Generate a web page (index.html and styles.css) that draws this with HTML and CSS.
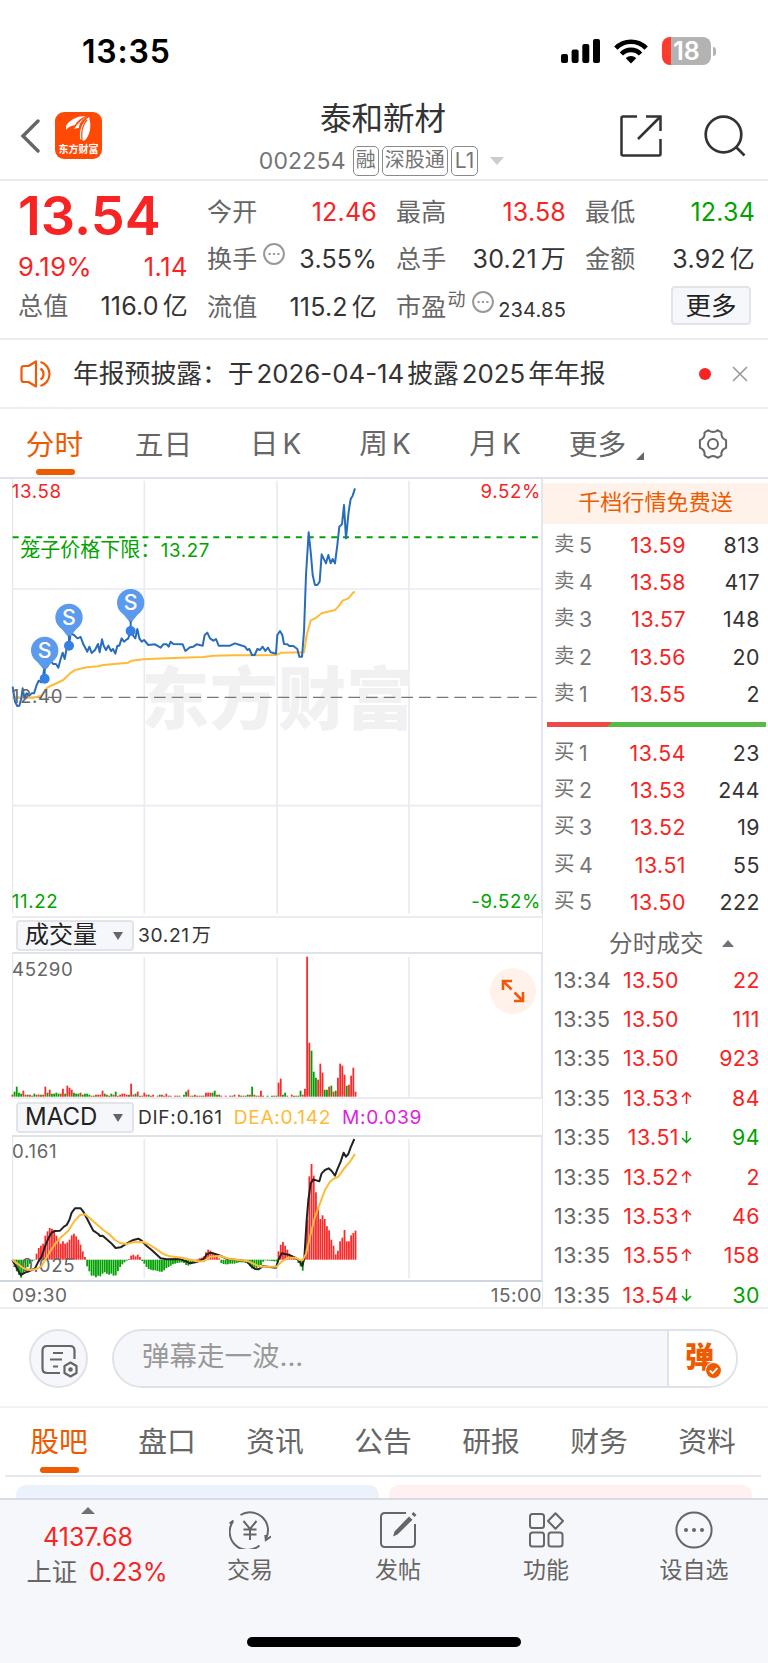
FILE: index.html
```html
<!DOCTYPE html>
<html lang="zh-CN">
<head>
  <meta charset="UTF-8" />
  <title>泰和新材 002254</title>
  <link rel="stylesheet" href="styles.css">
</head>
<body>
  <div class="status-bar">
    <span class="clock">13:35</span>
    <div class="status-icons">
      <svg class="signal" viewBox="0 0 39 24"><rect x="0" y="15" width="7" height="9" rx="2"/><rect x="10.6" y="10.5" width="7" height="13.5" rx="2"/><rect x="21.3" y="5" width="7" height="19" rx="2"/><rect x="32" y="0" width="7" height="24" rx="2"/></svg>
      <svg class="wifi" viewBox="0 0 34 25" fill="none" stroke="#000" stroke-width="4.6"><path d="M1.8 9.2C10 .6 24 .6 32.2 9.2"/><path d="M7.4 15C12.500 9.500 21.500 9.500 26.600 15"/><path d="M17 24.500l-5.200-5.300c2.900-2.900 7.500-2.900 10.400 0z" fill="#000" stroke="none"/></svg>
      <div class="battery"><span>18</span></div>
      <div class="battery-cap"></div>
    </div>
  </div>

  <header class="header">
    <svg class="back" viewBox="0 0 20 34" fill="none" stroke="#666" stroke-width="3.4" stroke-linecap="round"><path d="M18 2L3 17l15 15"/></svg>
    <div class="logo">
      <svg viewBox="0 0 47 30"><path d="M11 14c4-7 12-10 20-10-5 2-9 5-11 9-3 1-6 1-9 5z" fill="#fff"/><path d="M33 4c-6 3-11 8-14 13 2-1 4-1 5-1 0-5 4-9 9-12z" fill="#fff"/><path d="M34 5c-5 4-10 10-9 22l4 2c6-5 8-15 5-24z" fill="#fff"/><path d="M32 8c-5 5-6 11-5 20" stroke="#ff4a05" stroke-width="1.200" fill="none"/></svg>
      <span>东方财富</span>
    </div>
    <div class="title">
      <h1>泰和新材</h1>
      <div class="subtitle"><span class="code">002254</span><i>融</i><i>深股通</i><i class="level-tag">L1</i><b class="caret"></b></div>
    </div>
    <svg class="share" viewBox="0 0 42 42" fill="none" stroke="#333" stroke-width="2.500"><path d="M17 1.500H3q-1.500 0-1.500 1.500v36q0 1.500 1.500 1.500h36q1.500 0 1.500-1.500V24"/><path d="M26 1.500h14.500V16M40 2L18 24"/></svg>
    <svg class="search" viewBox="0 0 42 42" fill="none" stroke="#333" stroke-width="2.700"><circle cx="19.500" cy="19.500" r="17.800"/><path d="M32 32l8.500 8.500"/></svg>
  </header>

  <section class="quote">
    <div class="quote-col">
      <div class="price">13.54</div>
      <div class="row change red"><span>9.19%</span><span>1.14</span></div>
      <div class="row"><label>总值</label><span>116.0<u>亿</u></span></div>
    </div>
    <div class="quote-col">
      <div class="row"><label>今开</label><span class="red">12.46</span></div>
      <div class="row"><label>换手<svg class="dots" viewBox="0 0 22 22"><circle cx="11" cy="11" r="9.900"/><path d="M5.500 11h2.200M9.900 11h2.200M14.300 11h2.200"/></svg></label><span>3.55%</span></div>
      <div class="row"><label>流值</label><span>115.2<u>亿</u></span></div>
    </div>
    <div class="quote-col">
      <div class="row"><label>最高</label><span class="red">13.58</span></div>
      <div class="row"><label>总手</label><span>30.21<u>万</u></span></div>
      <div class="row"><label>市盈<sup>动</sup><svg class="dots" viewBox="0 0 22 22"><circle cx="11" cy="11" r="9.900"/><path d="M5.500 11h2.200M9.900 11h2.200M14.300 11h2.200"/></svg></label><span class="pe">234.85</span></div>
    </div>
    <div class="quote-col">
      <div class="row"><label>最低</label><span class="green">12.34</span></div>
      <div class="row"><label>金额</label><span>3.92<u>亿</u></span></div>
      <button class="more-btn">更多</button>
    </div>
  </section>

  <section class="notice">
    <svg class="speaker" viewBox="0 0 34 28" fill="none" stroke="#ee5a0a" stroke-width="2.200"><path d="M16 1.500v25L8.500 22H4q-2.500 0-2.500-2.500v-11Q1.500 6 4 6h4.500z" stroke-linejoin="round"/><path d="M20.500 8.500a6.500 6.500 0 0 1 0 11M20.500 2a12.500 12.500 0 0 1 0 24"/></svg>
    <p>年报预披露：于<em>2026-04-14</em>披露<em>2025</em>年年报</p>
    <span class="red-dot"></span>
    <svg class="close" viewBox="0 0 16 16" stroke="#999" stroke-width="1.600"><path d="M1 1l14 14M15 1L1 15"/></svg>
  </section>

  <nav class="chart-tabs">
    <span class="active">分时</span>
    <span>五日</span>
    <span>日<em>K</em></span>
    <span>周<em>K</em></span>
    <span>月<em>K</em></span>
    <span class="has-corner">更多</span>
    <svg class="gear" viewBox="0 0 32 32" fill="none" stroke="#666" stroke-width="2"><circle cx="16" cy="16" r="5"/><path d="M11.500 2.200q4.500 3.600 9 0l4 2.300q-.8 5.700 4.600 7.700v7.600q-5.400 2-4.600 7.700l-4 2.300q-4.500-3.600-9 0l-4-2.300q.8-5.700-4.600-7.700v-7.600q5.400-2 4.600-7.700z" stroke-linejoin="round"/></svg>
  </nav>

  <main class="market">
    <div class="charts">
      <svg class="plot price-plot" viewBox="0 12 1626 1311">
        <g class="grid">
          <path d="M38 12V1316M1625 12V1316"/>
          <path class="bold" d="M433 17V1316M831 17V1316M1227 17V1316M38 342H1625M38 992H1625"/>
        </g>
        <text class="watermark" x="424" y="748">东方财富</text>
        <path class="base-line" d="M38 667H1615"/>
        <path class="cage-line" d="M38 187H1615"/>
        <polyline class="avg" points="38,668 100,668 125,662 140,640 150,633 165,627 190,615 210,595 225,585 260,577 295,574 310,570 385,563 395,557 430,553 520,549 610,546 640,542 700,541 828,540 845,533 912,532 920,480 932,437 950,427 965,415 1005,405 1015,395 1028,377 1045,370 1060,352 1065,352"/>
        <polyline class="last" points="38,635 45,680 52,693 58,692 64,670 68,640 73,668 80,655 88,662 95,655 102,655 110,630 116,617 124,622 130,600 134,570 142,575 150,557 160,567 168,567 175,578 181,555 188,533 194,552 200,520 207,512 212,475 222,480 232,490 242,486 250,508 262,530 268,515 275,534 285,525 294,507 299,532 306,493 311,512 318,525 325,512 333,528 339,522 346,536 352,512 358,512 365,490 372,500 378,495 385,490 391,469 398,480 406,490 412,462 418,490 425,500 432,495 445,510 465,508 482,518 490,508 500,508 506,515 512,500 520,507 548,508 556,528 570,517 580,515 590,508 608,512 614,480 622,473 630,490 640,497 648,492 656,512 690,512 705,505 720,510 735,515 742,525 748,522 756,540 764,540 772,522 780,525 788,515 796,528 804,518 812,532 828,536 832,480 840,468 847,480 852,507 862,508 868,513 880,513 892,522 898,545 906,545 912,470 918,300 926,172 933,240 938,300 945,330 952,330 959,320 965,238 978,265 985,240 992,265 998,252 1005,265 1012,210 1018,155 1026,148 1032,90 1038,190 1046,110 1052,72 1058,62 1065,40"/>
        <g id="markers"></g>
        <text class="up" x="35" y="68">13.58</text>
        <text class="up end" x="1623" y="68">9.52%</text>
        <text class="down cage-label" x="61" y="246">笼子价格下限：</text>
        <text class="down" x="482" y="245">13.27</text>
        <text x="35" y="684">12.40</text>
        <text class="down" x="35" y="1300">11.22</text>
        <text class="down end" x="1623" y="1300">-9.52%</text>
      </svg>

      <div class="indicator">
        <button>成交量</button>
        <span class="amount">30.21<u>万</u></span>
      </div>
      <div class="volume">
        <svg class="plot volume-plot" viewBox="0 162 1626 432">
          <g class="grid">
            <path d="M38 165V590M1625 162V594"/>
            <path class="bold" d="M433 171V590M831 171V590M1227 171V590"/>
          </g>
          <g id="volumeBars"></g>
          <text x="36" y="227">45290</text>
        </svg>
        <div class="expand">
          <svg viewBox="0 0 24 24" fill="none" stroke="#ee5a0a" stroke-width="2.600"><path d="M2 11V2h9M2 2l8.500 8.500M22 13v9h-9M22 22l-8.500-8.500"/></svg>
        </div>
      </div>

      <div class="indicator macd-head">
        <button>MACD</button>
        <span>DIF:0.161</span><span class="dea">DEA:0.142</span><span class="m">M:0.039</span>
      </div>
      <svg class="plot macd-plot" viewBox="0 21 1626 429">
        <g class="grid">
          <path d="M38 21V445M1625 21V450"/>
          <path class="bold" d="M433 27V445M831 27V445M1227 27V445"/>
        </g>
        <g id="macdBars"></g>
        <text x="36" y="84">0.161</text>
        <text x="36" y="427">-0.025</text>
        <polyline class="dif-line" points="37,390 62,435 75,428 85,425 105,415 115,395 125,380 135,350 145,325 155,308 165,303 180,302 192,290 200,285 208,270 215,248 225,235 242,235 250,245 262,268 272,287 280,302 295,312 300,318 308,317 320,328 332,338 347,354 362,352 375,344 390,335 400,330 415,326 425,332 440,348 455,360 468,372 482,385 500,388 540,387 560,395 570,400 590,396 612,386 620,373 632,368 655,375 680,386 740,394 755,410 765,417 775,418 788,409 810,411 828,413 835,390 845,370 865,374 885,383 898,392 907,408 913,385 920,270 925,210 932,160 940,148 958,154 965,130 975,120 986,115 995,123 1005,137 1012,118 1022,95 1031,68 1038,80 1045,72 1052,52 1063,27"/>
        <polyline class="avg" points="37,390 55,403 70,415 90,420 110,417 125,408 135,390 150,365 165,342 180,325 205,302 222,275 240,255 255,253 270,265 290,283 310,300 330,315 345,330 360,339 380,342 400,337 430,336 450,345 470,358 490,372 510,379 550,384 590,394 612,394 630,380 660,378 690,387 745,394 765,403 780,410 830,410 845,395 865,383 885,383 900,390 908,390 918,372 930,320 945,260 960,220 975,180 990,155 1000,147 1015,140 1035,112 1050,95 1065,72"/>
      </svg>
      <div class="time-axis"><span>09:30</span><span>15:00</span></div>
    </div>

    <aside class="book">
      <div class="banner">千档行情免费送</div>
      <div class="levels" id="sells"></div>
      <div class="ratio"><svg viewBox="0 0 219 5" preserveAspectRatio="none"><path d="M0 0h219v5H0z" fill="#55bb44"/><path d="M0 0h65l-5 5H0z" fill="#ee4848"/></svg></div>
      <div class="levels buys" id="buys"></div>
      <div class="ticks-title">分时成交<b class="caret-up"></b></div>
      <div class="ticks" id="ticks"></div>
    </aside>
  </main>

  <section class="comment">
    <div class="comment-settings">
      <svg viewBox="0 0 38 34" fill="none" stroke="#666" stroke-width="2.200"><path d="M19 29H6q-4.500 0-4.500-4.500v-18Q1.500 2 6 2h23q4.500 0 4.500 4.500V15"/><path d="M12 9h10M9 15.500h12M12 22.500h5"/><path d="M29.500 18.500l6 3.500v7l-6 3.500-6-3.500v-7z" stroke-linejoin="round"/><circle cx="29.500" cy="25.500" r="1.200"/></svg>
    </div>
    <div class="comment-box">
      <span class="placeholder">弹幕走一波...</span>
      <div class="danmu">
        <b>弹</b>
        <svg viewBox="0 0 16 16"><circle cx="8" cy="8" r="7.500" fill="#ee5a00" stroke="#fff"/><path d="M4.500 8l2.600 2.600 4.500-4.800" fill="none" stroke="#fff" stroke-width="1.700"/></svg>
      </div>
    </div>
  </section>

  <nav class="info-tabs">
    <span class="active">股吧</span><span>盘口</span><span>资讯</span><span>公告</span><span>研报</span><span>财务</span><span>资料</span>
  </nav>
  <div class="cards"><div class="card-blue"></div><div class="card-pink"></div></div>

  <footer class="tabbar">
    <div class="index">
      <b class="caret-up"></b>
      <div class="index-value red">4137.68</div>
      <div class="index-change"><span>上证</span><span class="red">0.23%</span></div>
    </div>
    <div class="tab">
      <svg viewBox="0 0 42 38"><path d="M11.500 4A18 18 0 0 1 37 27.500M30.500 34.500A18 18 0 0 1 4 10.500M.5 12.500L4.500 9.500M42 25.500l-5.200 3.500-.5-5"/><path d="M14.500 10l6.500 8 6.500-8M21 18v11M14.500 18.500h13M14.500 23.500h13"/></svg>
      <span>交易</span>
    </div>
    <div class="tab">
      <svg viewBox="0 0 42 38"><path d="M29 2H8q-4 0-4 4v26q0 4 4 4h26q4 0 4-4V13"/><path class="fill" d="M32 5.500l3.500 3.200L20.500 23.500l-4.500 2 1.500-5zM34.500 3l2-2 3 3-2 2z"/></svg>
      <span>发帖</span>
    </div>
    <div class="tab">
      <svg viewBox="0 0 42 38"><rect x="5" y="3" width="14" height="14" rx="2.500"/><rect x="5" y="21.500" width="14" height="14" rx="2.500"/><rect x="23.500" y="21.500" width="14" height="14" rx="2.500"/><path d="M30.500 2.200l7.500 7.800-7.500 7.800L23 10z" stroke-linejoin="round"/></svg>
      <span>功能</span>
    </div>
    <div class="tab">
      <svg viewBox="0 0 42 38"><circle cx="21" cy="19" r="17.600"/><g class="fill"><circle cx="13" cy="19" r="2"/><circle cx="21" cy="19" r="2"/><circle cx="29" cy="19" r="2"/></g></svg>
      <span>设自选</span>
    </div>
    <div class="home-indicator"></div>
  </footer>

  <script src="script.js"></script>
</body>
</html>
```
FILE: styles.css
```css
* {
  box-sizing: border-box;
  margin: 0;
  padding: 0;
}

body {
  width: 768px;
  height: 1663px;
  overflow: hidden;
  background: #fff;
  color: #333;
  font-family: Inter, "Noto Sans CJK SC", sans-serif;
  font-size: 25px;
}

svg { display: block; flex: none; }
em, i, u { font-style: normal; text-decoration: none; }
.red { color: #f82323; }
.green { color: #00a300; }

/* status bar */
.status-bar {
  height: 96px;
  padding: 6px 52px 0 82px;
  display: flex;
  align-items: center;
  justify-content: space-between;
}

.clock {
  color: #000;
  font-size: 32px;
  font-weight: 600;
  letter-spacing: .8px;
}

.status-icons { display: flex; align-items: center; }
.signal { width: 39px; height: 24px; }
.wifi { width: 34px; height: 25px; margin: 0 14px; }

.battery {
  width: 49px;
  height: 28px;
  border-radius: 8px;
  background: linear-gradient(to right, #ff3b30 9px, #b3b3b3 9px);
  color: #fff;
  font-size: 25px;
  font-weight: 600;
  line-height: 28px;
  text-align: center;
}

.battery-cap {
  width: 3px;
  height: 9px;
  margin-left: 2px;
  border-radius: 0 4px 4px 0;
  background: #b3b3b3;
}

/* header */
.header {
  height: 85px;
  padding: 0 22px 0 20px;
  display: flex;
  align-items: flex-start;
  border-bottom: 2px solid #e9eaee;
}

.back { width: 20px; height: 34px; margin-top: 23px; }

.logo {
  width: 47px;
  height: 47px;
  margin: 16px 0 0 15px;
  border-radius: 9px;
  background: #ff4a05;
  color: #fff;
  text-align: center;
}

.logo svg { width: 47px; height: 30px; }
.logo span {
  display: block;
  font-family: "Noto Sans CJK SC", sans-serif;
  font-size: 10px;
  font-weight: 700;
  line-height: 13px;
}

.title { flex: 1; text-align: center; }
.title h1 {
  margin: 1px 0 0 44px;
  font-size: 31.500px;
  font-weight: 400;
  line-height: 44px;
  height: 49px;
}

.subtitle {
  display: flex;
  justify-content: center;
  padding-left: 41px;
  gap: 3px;
  align-items: center;
  color: #757575;
  font-size: 20px;
  height: 30px;
}

.code { margin-right: 4px; font-size: 23px; letter-spacing: .2px; }
.subtitle i {
  height: 30px;
  padding: 0 2px;
  border: 1.500px solid #8a8a8a;
  border-radius: 5px;
  line-height: 27px;
}
.subtitle .level-tag { padding: 0 3px; font-size: 21px; }

.caret {
  margin-left: 9px;
  border: 7px solid transparent;
  border-top: 8px solid #ccc;
  border-bottom: 0;
}

.share { width: 42px; height: 42px; margin: 19px 42px 0 0; }
.search { width: 42px; height: 42px; margin-top: 19px; }

/* quote */
.quote {
  height: 159px;
  padding: 8px 0 0 18px;
  display: grid;
  grid-template-columns: repeat(4, 170px);
  gap: 19px;
  border-bottom: 2px solid #ececec;
}

.row {
  height: 47.300px;
  display: flex;
  align-items: center;
  justify-content: space-between;
  line-height: 47px;
  letter-spacing: .2px;
  white-space: nowrap;
}

.row label { display: flex; color: #666; }
.row u { margin-left: 4px; }
.price {
  height: 53px;
  color: #f82323;
  font-size: 54px;
  font-weight: 600;
  line-height: 53px;
}
.change { height: 41px; line-height: 41px; padding-top: 8px; font-size: 25.500px; letter-spacing: .5px; }
.row sup { font-size: 18px; line-height: 32px; margin-left: 1px; }
.dots {
  width: 22px;
  height: 22px;
  margin: 7px 0 0 6px;
  fill: none;
  stroke: #999;
  stroke-width: 2;
}
.pe { font-size: 20px; padding-top: 6px; }

.more-btn {
  display: block;
  width: 80px;
  height: 39px;
  margin: 2px 0 0 86px;
  border: 2px solid #e2e4ea;
  border-radius: 4px;
  background: #f6f7fa;
  color: #222;
  font: 25.500px/32px "Noto Sans CJK SC", sans-serif;
}
.more-btn { padding-bottom: 2px; }

/* notice */
.notice {
  height: 69px;
  padding: 0 20px 0 20px;
  display: flex;
  align-items: center;
  border-bottom: 2px solid #eee;
}

.speaker { width: 34px; height: 28px; }
.notice p { flex: 1; margin-left: 19px; padding-bottom: 4px; font-size: 25.800px; white-space: nowrap; }
.notice em { margin: 0 3px; }
.red-dot { width: 12px; height: 12px; border-radius: 50%; background: #f82323; }
.close { width: 16px; height: 16px; margin-left: 21px; }

/* chart tabs */
.chart-tabs {
  height: 70px;
  display: grid;
  grid-template-columns: 109px 109px 115px 104px 116px 89px 1fr;
  align-items: center;
  border-bottom: 2px solid #dfe2e8;
  color: #666;
  font-size: 28.700px;
  line-height: 69px;
  text-align: center;
}

.chart-tabs em { margin-left: 4px; font-size: 28px; }
.chart-tabs span, .info-tabs span { position: relative; }
.active { color: #ee5a00; }
.active::after {
  content: "";
  position: absolute;
  left: 50%;
  bottom: 4px;
  width: 39px;
  height: 6px;
  margin-left: -19px;
  border-radius: 3px;
  background: #ee5a00;
}

.has-corner::after {
  content: "";
  position: absolute;
  right: -2px;
  bottom: 19px;
  border-left: 8px solid transparent;
  border-bottom: 8px solid #666;
}

.gear { width: 32px; height: 32px; margin-left: 55px; }

/* charts */
.market {
  height: 830px;
  display: flex;
  border-bottom: 2px solid #eee;
}

.charts { width: 542px; flex: none; }
.plot { width: 542px; fill: none; }
.price-plot { height: 437px; }
.volume-plot { height: 144px; }
.macd-plot { height: 145px; border-bottom: 2px solid #cfd5dd; }

.plot text { font-size: 56px; letter-spacing: 2px; fill: #666; }
.plot .up { fill: #f82323; }
.plot .down { fill: #00a300; }
.plot .end { text-anchor: end; }
.plot .cage-label { font-size: 60px; letter-spacing: 0; }
.plot .watermark {
  font-family: "Noto Sans CJK SC", sans-serif;
  font-size: 204px;
  font-weight: 900;
  letter-spacing: 1px;
  fill: #f1f1f1;
}

.grid path { stroke: #dfe2ee; stroke-width: 3; }
.grid .bold { stroke: #e8ebf2; stroke-width: 5; }
.base-line { stroke: #777; stroke-width: 4; stroke-dasharray: 35 18; }
.cage-line { stroke: #00a300; stroke-width: 6; stroke-dasharray: 18 17.400; }
.last { stroke: #286dbb; stroke-width: 6; stroke-linejoin: round; }
.avg { stroke: #ffba38; stroke-width: 6; stroke-linejoin: round; }
.dif-line { stroke: #222; stroke-width: 6; stroke-linejoin: round; }
.bar-up { stroke: #f82a2a; stroke-width: 5.400; }
.bar-down { stroke: #00a000; stroke-width: 5.400; }
.pin { fill: #5b9aed; }
.pin-dot { fill: #3480e5; }
.plot .pin-text { font-size: 64px; font-weight: 500; letter-spacing: 0; fill: #fff; text-anchor: middle; }

.indicator {
  height: 38px;
  margin-left: 12px;
  padding: 0 0 0 4px;
  display: flex;
  align-items: center;
  border-top: 2px solid #ececf0;
  border-bottom: 2px solid #dfe2e8;
  font-size: 19.200px;
  letter-spacing: .65px;
}

.macd-head { height: 40px; }
.indicator button {
  position: relative;
  width: 118px;
  height: 31px;
  margin-right: 4px;
  padding-left: 7px;
  border: 2px solid #e2e4ea;
  border-radius: 4px;
  background: #f6f7fa;
  color: #222;
  font: 24px/26px Inter, "Noto Sans CJK SC", sans-serif;
  text-align: left;
}

.indicator button::after {
  content: "";
  position: absolute;
  right: 9px;
  top: 10px;
  border: 5px solid transparent;
  border-top: 8px solid #666;
  border-bottom: 0;
}

.amount { padding-bottom: 2px; }
.amount u { margin-left: 2px; }
.dea { margin-left: 11px; color: #ffba38; }
.m { margin-left: 11px; color: #e021e0; }

.volume { position: relative; height: 143px; }
.expand {
  position: absolute;
  left: 490px;
  top: 14px;
  width: 46px;
  height: 46px;
  padding: 11px;
  border-radius: 50%;
  background: #fff2eb;
}
.expand svg { width: 24px; height: 24px; }

.time-axis {
  height: 26px;
  padding-left: 12px;
  display: flex;
  justify-content: space-between;
  color: #666;
  font-size: 19px;
  letter-spacing: .5px;
  line-height: 28px;
}

/* order book */
.book {
  flex: 1;
  padding-top: 4px;
  border-left: 1px solid #e4e6ee;
  font-size: 21.300px;
  letter-spacing: .5px;
  overflow: hidden;
}

.banner {
  height: 41px;
  background: #fff2eb;
  color: #ee5a00;
  font-size: 22px;
  letter-spacing: .1px;
  line-height: 38px;
  text-align: center;
}

.levels { padding: 3px 8px 0 11px; }
.level {
  height: 37.200px;
  display: grid;
  grid-template-columns: 60px 72px 1fr;
  align-items: center;
  line-height: 37px;
  text-align: right;
}

.level label { display: flex; gap: 4px; color: #757575; }
.level label u { font-size: 20.500px; line-height: 34px; }
.ratio { padding: 9px 2px 0 4px; }
.ratio svg { width: 219px; height: 5px; }
.buys { padding-top: 8px; }

.ticks-title {
  height: 39px;
  padding: 4px 0 0 66px;
  display: flex;
  align-items: center;
  color: #666;
  font-size: 23.500px;
  letter-spacing: .2px;
}

.caret-up {
  border: 6px solid transparent;
  border-top: 0;
  border-bottom: 7px solid #707078;
}
.ticks-title .caret-up { margin: 2px 0 0 18px; }

.ticks { padding: 0 8px 0 11px; }
.tick {
  height: 39.400px;
  display: grid;
  grid-template-columns: 58px 67px 15px 1fr;
  align-items: center;
  text-align: right;
}
.tick span:first-child { color: #666; text-align: left; }
.tick svg { width: 11px; height: 14px; margin-left: 2px; fill: none; stroke: currentColor; stroke-width: 1.500; }

/* comment input */
.comment {
  height: 99px;
  padding: 20px 30px 0 29px;
  display: flex;
  border-bottom: 2px solid #f2f2f4;
}

.comment-settings {
  width: 59px;
  height: 59px;
  padding: 13px 10px;
  border: 2px solid #e0e2e8;
  border-radius: 50%;
  background: #f6f7fa;
}
.comment-settings svg { width: 38px; height: 34px; }

.comment-box {
  flex: 1;
  height: 59px;
  margin-left: 24px;
  display: flex;
  overflow: hidden;
  border: 2px solid #dfe2e8;
  border-radius: 30px;
  background: #f6f7fa;
}

.placeholder {
  flex: 1;
  padding-left: 28px;
  color: #999;
  font-size: 27.500px;
  line-height: 51px;
}

.danmu {
  position: relative;
  width: 69px;
  border-left: 2px solid #dfe2e8;
  background: #fff;
}
.danmu b {
  display: block;
  padding-left: 16px;
  color: #ee5a00;
  font-size: 29px;
  font-weight: 900;
  line-height: 54px;
}
.danmu svg { position: absolute; left: 36px; top: 31px; width: 17px; height: 17px; }

/* info tabs */
.info-tabs {
  height: 69px;
  margin: 0 7px 0 5px;
  display: grid;
  grid-template-columns: repeat(7, 108px);
  border-bottom: 2px solid #e6e7ee;
  color: #666;
  font-size: 28.800px;
  line-height: 68px;
  text-align: center;
}
.info-tabs .active::after { bottom: 3px; }

.cards {
  height: 21px;
  padding: 8px 16px 0;
  display: grid;
  grid-template-columns: 1fr 1fr;
  gap: 10px;
}
.card-blue { border-radius: 10px 10px 0 0; background: #ecf2fc; }
.card-pink { border-radius: 10px 10px 0 0; background: #fff1f1; }

/* bottom bar */
.tabbar {
  position: relative;
  height: 166px;
  display: grid;
  grid-template-columns: 176px repeat(4, 148px);
  border-top: 2px solid #d9dde3;
  background: #f6f7fa;
  color: #666;
}

.index { display: flex; flex-direction: column; align-items: center; padding-top: 7px; }
.index-value { margin-top: 6px; font-size: 25px; line-height: 34px; }
.index-change { display: flex; gap: 12px; padding-left: 18px; font-size: 25.300px; line-height: 36px; }

.index .caret-up { border-width: 0 7px 7px; }
.tab { display: flex; flex-direction: column; align-items: center; font-size: 23px; }
.tab svg { width: 42px; height: 38px; margin-top: 11px; fill: none; stroke: #666; stroke-width: 2; }
.tab .fill { fill: #666; stroke: none; }
.tab span { margin-top: 4px; line-height: 35px; }

.home-indicator {
  position: absolute;
  left: 247px;
  bottom: 17px;
  width: 274px;
  height: 10px;
  border-radius: 5px;
  background: #000;
}
```
FILE: script.js
```js
// one bar per minute, positive = red, negative = green
const volume = [
  2,-5,-10,-4,-3,6,2,-2,2,-1,-3,2,2,-2,2,10,-4,7,-3,-3,-4,-3,3,8,-3,11,9,7,-4,-3,
  -3,4,-2,-3,-3,-2,1,-1,2,2,2,6,-3,2,-1,-3,2,-5,1,2,3,3,2,-2,13,2,-3,5,-1,1,
  4,2,-2,1,2,0,1,-2,2,1,3,-1,1,0,1,-1,1,0,-2,-5,7,1,-1,2,-1,1,-1,1,4,4,
  4,-4,-6,2,-2,1,0,1,0,1,-1,2,0,2,-1,1,-1,-2,2,-10,2,-1,1,6,1,0,-1,0,-1,1,
  -1,14,18,-2,-4,1,0,2,-1,1,-1,-6,2,8,140,54,-46,-25,-19,17,33,24,-7,-7,10,-11,5,-6,19,33,
  31,22,-11,12,21,29,5
];
const macd = [
  0,-10,-35,-45,-54,-40,-32,-22,-12,-5,-2,18,35,42,48,72,85,95,93,88,72,60,48,55,48,52,60,73,78,70,
  60,45,25,8,-20,-35,-48,-48,-53,-48,-50,-42,-38,-42,-45,-42,-48,-47,-35,-22,-14,-8,-3,2,12,15,10,15,8,-4,
  -12,-22,-28,-30,-32,-32,-34,-36,-36,-32,-25,-22,-18,-14,-12,-10,-9,-8,-10,-16,-18,-14,-8,-3,2,4,6,10,22,30,
  27,23,18,12,4,-10,-13,-14,-14,-12,-12,-12,-10,-8,-8,-8,-10,-12,-20,-26,-28,-26,-22,-16,-6,-2,-3,-3,-4,-5,
  -5,25,45,53,42,30,18,14,10,5,-10,-20,-33,25,120,250,287,252,202,156,122,133,122,100,88,60,42,16,27,55,
  66,89,55,55,73,80,87
];

function drawBars(id, data, base, scale) {
  document.getElementById(id).innerHTML = data.map((v, i) => {
    const x = (i * 6.6 + 37).toFixed(1);
    return v ? `<path class="${v > 0 ? 'bar-up' : 'bar-down'}" d="M${x} ${base}V${base - (id === 'volumeBars' ? Math.abs(v) : v) * scale}"/>` : '';
  }).join('');
}
drawBars('volumeBars', volume, 590, 3);
drawBars('macdBars', macd, 389, 1);

const markers = [[134, 526, 611], [207, 427, 512], [392, 383, 468]];
document.getElementById('markers').innerHTML = markers.map(([x, y, dot]) => `
  <path class="pin" d="M${x - 39} ${y + 14}L${x} ${y + 62}L${x + 39} ${y + 14}z"/>
  <circle class="pin" cx="${x}" cy="${y}" r="41"/>
  <path class="last" d="M${x} ${y + 55}V${dot}"/>
  <circle class="pin-dot" cx="${x}" cy="${dot}" r="15"/>
  <text class="pin-text" x="${x}" y="${y + 22}">S</text>`).join('');

const sells = [[5, '13.59', 813], [4, '13.58', 417], [3, '13.57', 148], [2, '13.56', 20], [1, '13.55', 2]];
const buys = [[1, '13.54', 23], [2, '13.53', 244], [3, '13.52', 19], [4, '13.51', 55], [5, '13.50', 222]];
const level = side => ([n, price, qty]) => `
  <div class="level"><label><u>${side}</u>${n}</label><span class="red">${price}</span><span>${qty}</span></div>`;
document.getElementById('sells').innerHTML = sells.map(level('卖')).join('');
document.getElementById('buys').innerHTML = buys.map(level('买')).join('');

const ticks = [
  ['13:34', '13.50', 22, ''],
  ['13:35', '13.50', 111, ''],
  ['13:35', '13.50', 923, ''],
  ['13:35', '13.53', 84, 'up'],
  ['13:35', '13.51', 94, 'down'],
  ['13:35', '13.52', 2, 'up'],
  ['13:35', '13.53', 46, 'up'],
  ['13:35', '13.55', 158, 'up'],
  ['13:35', '13.54', 30, 'down']
];
const arrows = {
  up: '<svg class="red" viewBox="0 0 11 14"><path d="M5.500 13V2M1 6l4.500-4.500L10 6"/></svg>',
  down: '<svg class="green" viewBox="0 0 11 14"><path d="M5.500 1v11M1 8l4.500 4.500L10 8"/></svg>'
};
document.getElementById('ticks').innerHTML = ticks.map(([time, price, qty, dir]) => `
  <div class="tick"><span>${time}</span><span class="red">${price}</span><span>${arrows[dir] || ''}</span><span class="${dir === 'down' ? 'green' : 'red'}">${qty}</span></div>`).join('');
```
